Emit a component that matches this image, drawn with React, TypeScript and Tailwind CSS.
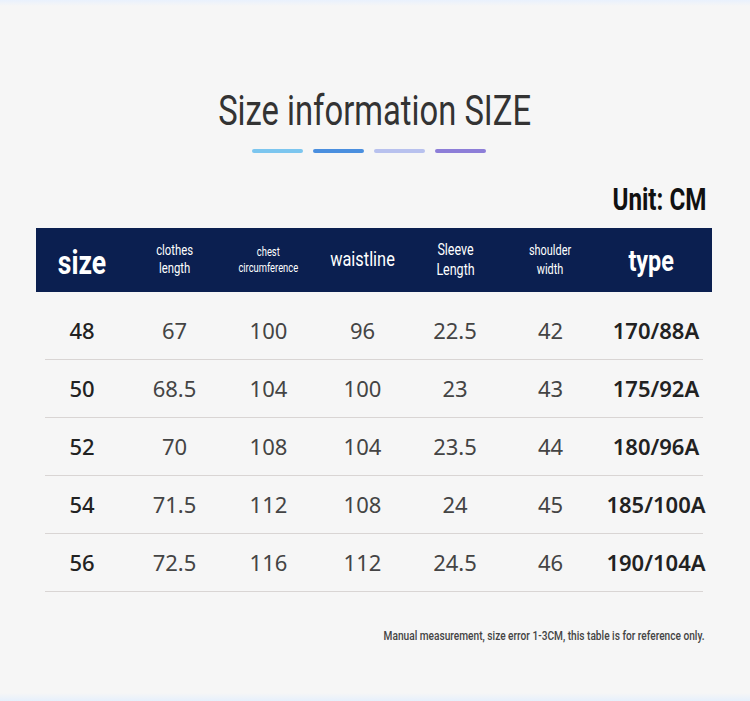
const rows = [
  ["48", "67", "100", "96", "22.5", "42", "170/88A"],
  ["50", "68.5", "104", "100", "23", "43", "175/92A"],
  ["52", "70", "108", "104", "23.5", "44", "180/96A"],
  ["54", "71.5", "112", "108", "24", "45", "185/100A"],
  ["56", "72.5", "116", "112", "24.5", "46", "190/104A"],
];

const cols = "grid grid-cols-[92px_93px_95px_93px_92px_99px_112px]";

// Roboto squeezed horizontally to get the condensed look of the original
const Narrow = ({ children, right }: { children: React.ReactNode; right?: boolean }) => (
  <span className={`inline-block scale-x-[0.78] ${right ? "origin-right" : "origin-center"}`}>{children}</span>
);

const App = () => {
  return (
    <div className="w-[750px] h-[701px] bg-[#f6f6f6] flex flex-col overflow-hidden font-['Roboto',sans-serif]">
      <div className="h-[6px] bg-gradient-to-b from-[#e9f1fd] to-[#f6f6f6]" />

      {/* Title */}
      <h1 className="text-center text-[42px] leading-none text-[#333] mt-[84px]">
        <Narrow>Size information SIZE</Narrow>
      </h1>
      <div className="flex justify-center gap-[10px] mt-[17px] pr-[12px]">
        <span className="w-[51px] h-[4px] rounded-full bg-[#7cc6ef]" />
        <span className="w-[51px] h-[4px] rounded-full bg-[#4a8fdf]" />
        <span className="w-[51px] h-[4px] rounded-full bg-[#b8c1ee]" />
        <span className="w-[51px] h-[4px] rounded-full bg-[#8d7ed8]" />
      </div>

      {/* Unit */}
      <div className="text-right font-bold text-[31px] leading-none text-[#111] pr-[44px] mt-[31px]">
        <Narrow right>Unit: CM</Narrow>
      </div>

      {/* Table */}
      <div className="mx-[36px] mt-[13px] w-[676px]">
        <div className={`${cols} h-[64px] bg-[#0b1f50] text-white items-center text-center`}>
          <div className="text-[34px] font-bold pt-[4px]"><Narrow>size</Narrow></div>
          <div className="text-[14.5px] leading-[18px]"><Narrow>clothes<br />length</Narrow></div>
          <div className="text-[12px] leading-[16px]"><Narrow>chest<br />circumference</Narrow></div>
          <div className="text-[21px]"><Narrow>waistline</Narrow></div>
          <div className="text-[16px] leading-[20px]"><Narrow>Sleeve<br />Length</Narrow></div>
          <div className="text-[14px] leading-[19px]"><Narrow>shoulder<br />width</Narrow></div>
          <div className="text-[30px] font-bold pr-[10px]"><Narrow>type</Narrow></div>
        </div>

        <div className="pt-[10px]">
          {rows.map((r) => (
            <div key={r[0]} className="mx-[9px] border-b border-[#d9d5d4]">
              <div className={`${cols} -mx-[9px] h-[57px] items-center text-center font-['Noto_Sans',sans-serif] text-[22px] text-[#444]`}>
                {r.map((v, i) => (
                  <div
                    key={i}
                    className={i === 0 ? "font-medium text-[#222]" : i === 6 ? "font-semibold text-[#222]" : ""}
                  >
                    {v}
                  </div>
                ))}
              </div>
            </div>
          ))}
        </div>
      </div>

      {/* Note */}
      <p className="text-right text-[13px] font-medium text-[#444] pr-[45px] mt-[34px]">
        <Narrow right>Manual measurement, size error 1-3CM, this table is for reference only.</Narrow>
      </p>

      <div className="mt-auto h-[8px] bg-gradient-to-b from-[#f6f6f6] to-[#e6f0fc]" />
    </div>
  );
};

export default App;
